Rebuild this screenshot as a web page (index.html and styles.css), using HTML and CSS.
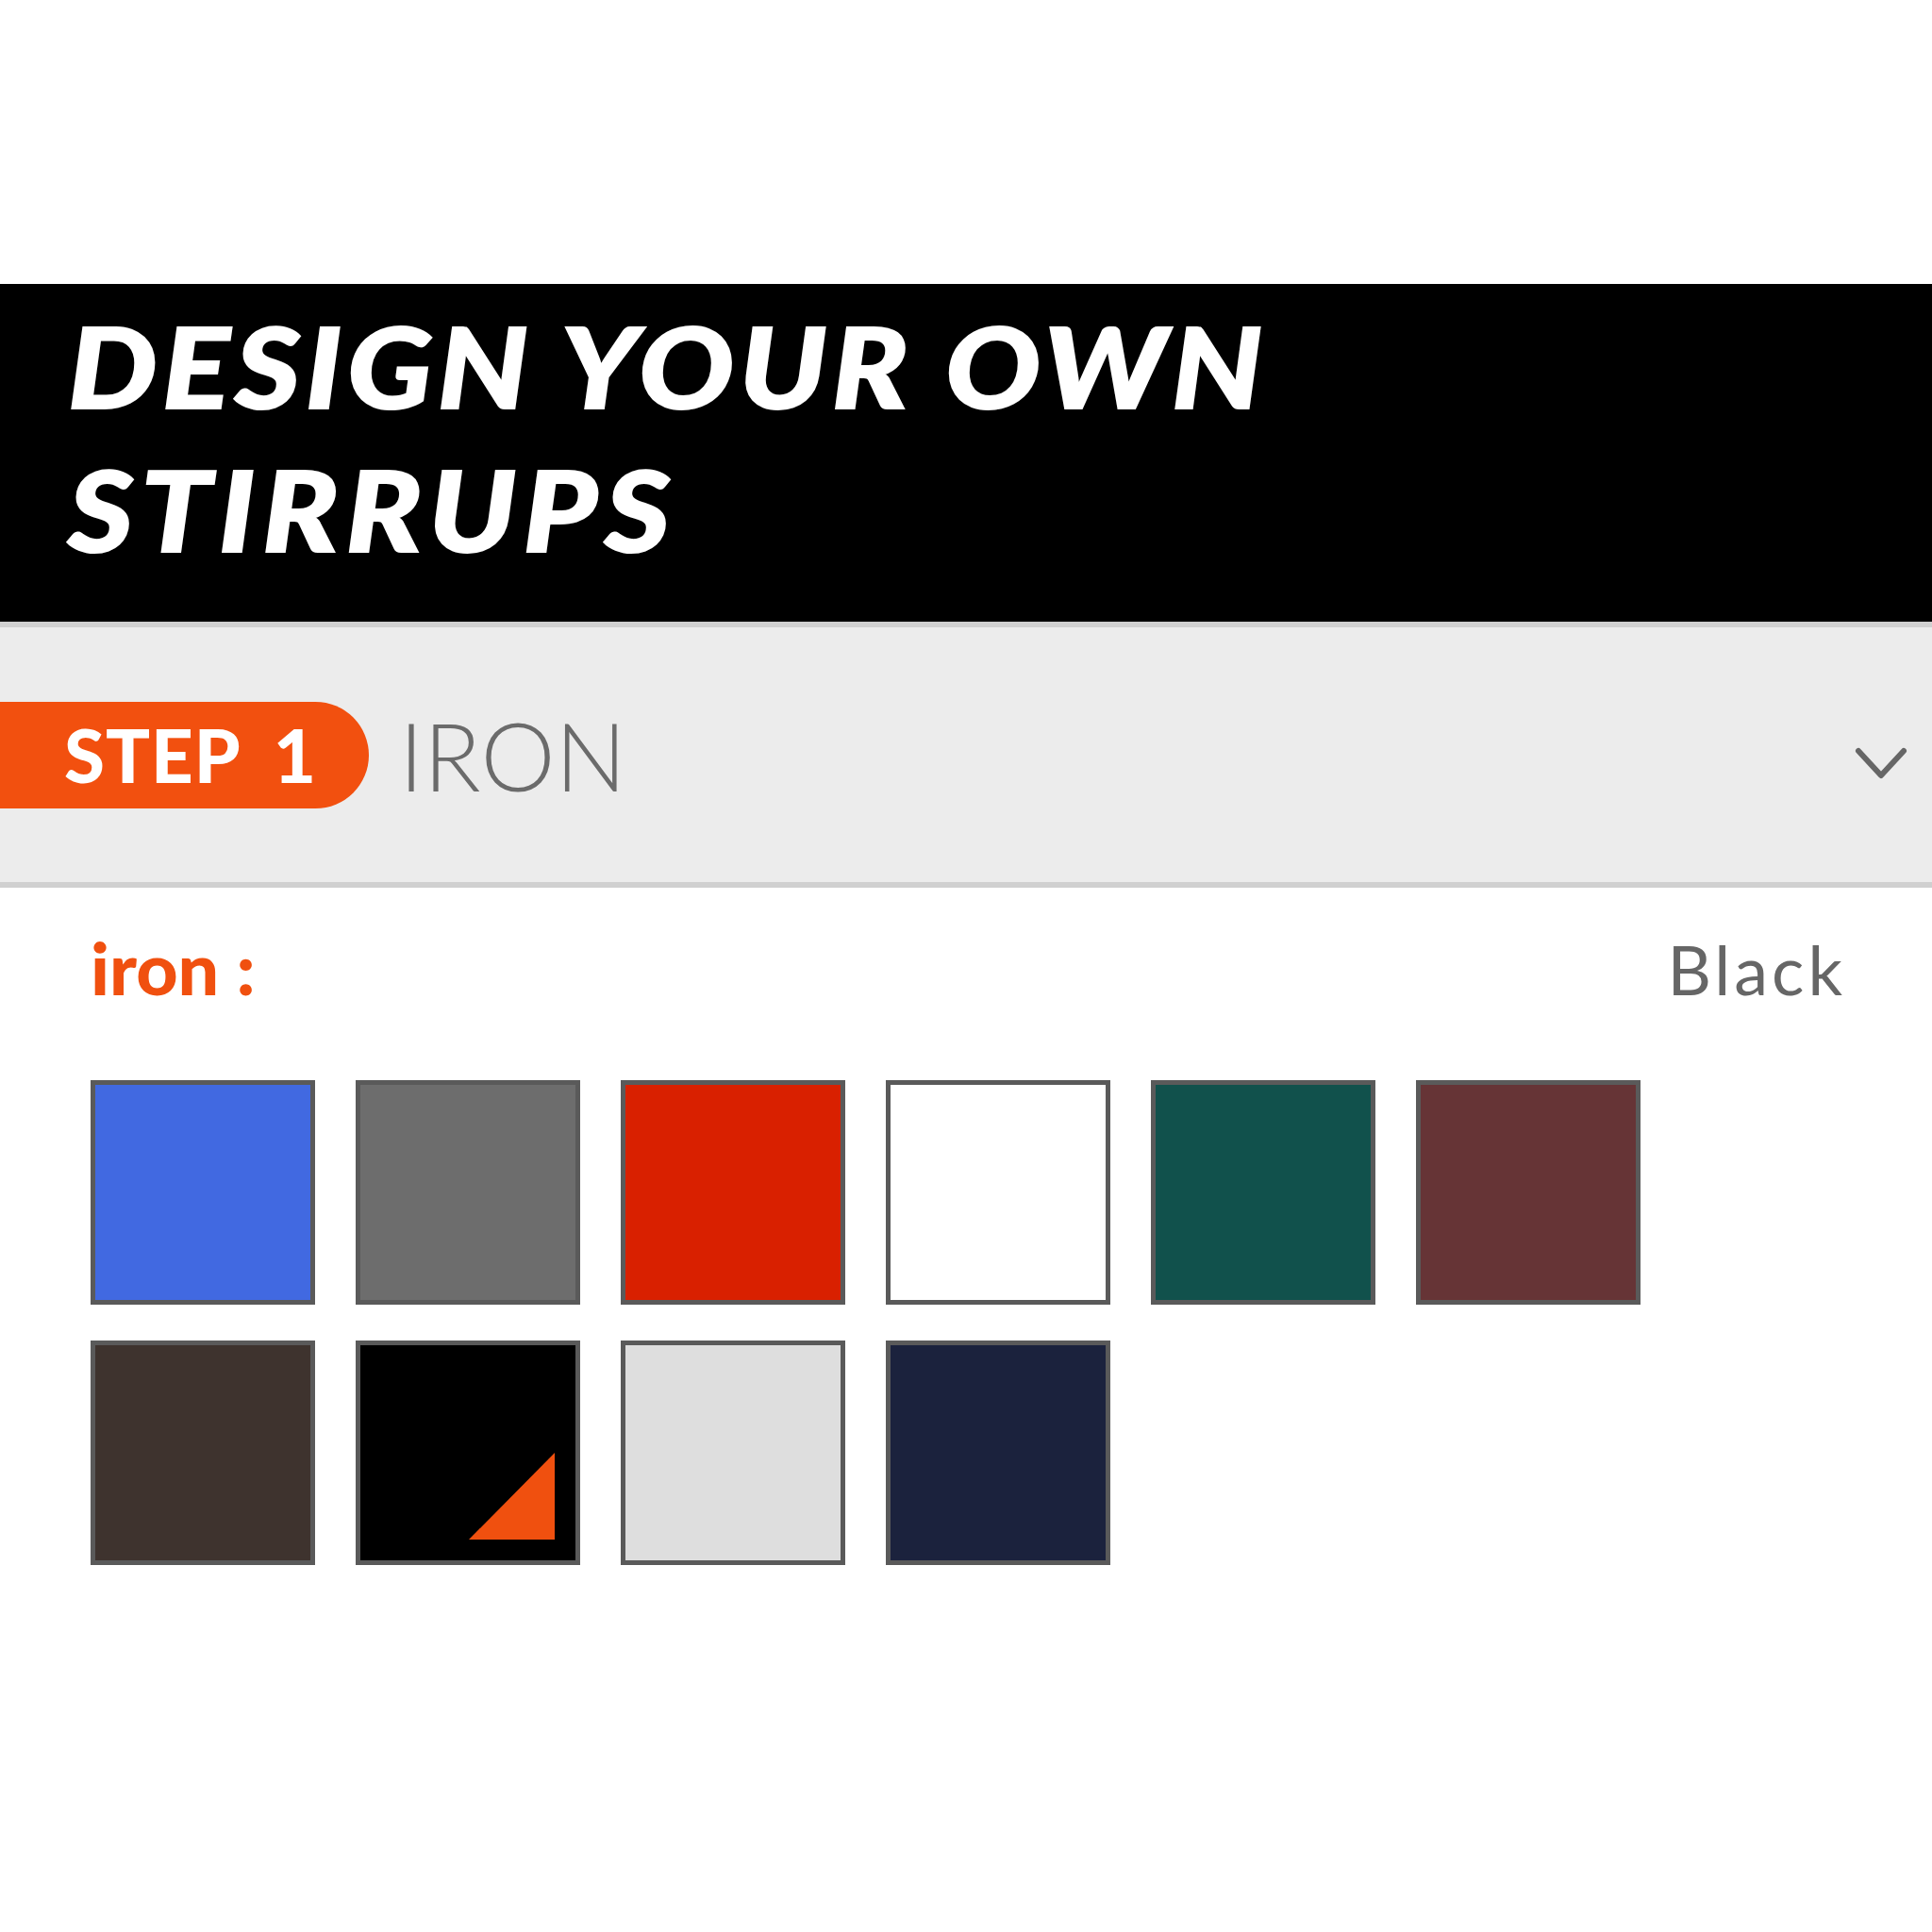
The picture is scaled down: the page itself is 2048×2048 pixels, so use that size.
FILE: index.html
```html
<!DOCTYPE html>
<html lang="en">
<head>
    <meta charset="UTF-8">
    <meta name="viewport" content="width=device-width, initial-scale=1.0">
    <title>Design your own stirrups</title>
    <link rel="stylesheet" href="styles.css">
</head>
<body>
    <div class="designer">
        <h1 class="title">
            <span class="title-line">DESIGN YOUR OWN</span>
            <span class="title-line">STIRRUPS</span>
        </h1>

        <div class="step-bar">
            <div class="step-pill">STEP <span class="step-num">1</span></div>
            <div class="step-name">IRON</div>
            <svg class="chevron" width="56" height="36" viewBox="0 0 56 36">
                <polyline points="4,4 28,30 52,4" fill="none" stroke="#666" stroke-width="6" stroke-linecap="round" stroke-linejoin="round"/>
            </svg>
        </div>

        <div class="option-head">
            <span class="option-label">iron :</span>
            <span class="option-value">Black</span>
        </div>

        <div class="swatches">
            <div class="swatch blue"></div>
            <div class="swatch grey"></div>
            <div class="swatch red"></div>
            <div class="swatch white"></div>
            <div class="swatch green"></div>
            <div class="swatch maroon"></div>
            <div class="swatch brown"></div>
            <div class="swatch black selected"></div>
            <div class="swatch silver"></div>
            <div class="swatch navy"></div>
        </div>
    </div>
</body>
</html>
```

FILE: styles.css
```css
body {
    margin: 0;
    padding: 0;
    background: #fff;
    font-family: Lato, "Liberation Sans", sans-serif;
}
.designer {
    padding-top: 301px;
}
.title {
    margin: 0;
    padding: 10px 72px 44px;
    background: #000;
    color: #fff;
    font-size: 119px;
    font-weight: 900;
    font-style: italic;
    line-height: 152px;
    letter-spacing: 5px;
    -webkit-text-stroke: 2px #fff;
}
.title-line {
    display: block;
    width: fit-content;
    transform: scaleX(1.12);
    transform-origin: 0 0;
}
.title-line + .title-line {
    letter-spacing: 7px;
}
.step-bar {
    display: flex;
    align-items: center;
    height: 270px;
    background: #ececec;
    border-top: 6px solid #d0d0d0;
    border-bottom: 6px solid #d0d0d0;
}
.step-pill {
    display: flex;
    align-items: center;
    box-sizing: border-box;
    width: 391px;
    height: 113px;
    padding-left: 68px;
    background: #f2500f;
    border-radius: 0 57px 57px 0;
    color: #fff;
    font-size: 78px;
    font-weight: 900;
    letter-spacing: 1px;
}
.step-num {
    margin-left: 34px;
}
.step-name {
    margin-left: 32px;
    color: #6b6b6b;
    font-size: 100px;
    font-weight: 300;
}
.chevron {
    margin-left: auto;
    margin-right: 26px;
    margin-top: 20px;
}
.option-head {
    display: flex;
    justify-content: space-between;
    align-items: baseline;
    padding: 39px 95px 0 96px;
    line-height: 90px;
}
.option-label {
    color: #f0500f;
    font-size: 77px;
    font-weight: 900;
}
.option-value {
    color: #666;
    font-size: 72px;
    letter-spacing: 4px;
    margin-right: -4px;
}
.swatches {
    display: grid;
    grid-template-columns: repeat(6, 238px);
    gap: 38px 43px;
    padding: 73px 96px;
}
.swatch {
    position: relative;
    box-sizing: border-box;
    height: 238px;
    border: 5px solid #5a5a5a;
}
.blue { background: #4169e1; }
.grey { background: #6d6d6d; }
.red { background: #d92000; }
.white { background: #fff; }
.green { background: #11514c; }
.maroon { background: #663436; }
.brown { background: #3e332e; }
.black { background: #000; }
.silver { background: #dedede; }
.navy { background: #1b223d; }
.selected::after {
    content: "";
    position: absolute;
    right: 22px;
    bottom: 22px;
    width: 91px;
    height: 92px;
    background: #f0500f;
    clip-path: polygon(100% 0, 100% 100%, 0 100%);
}
```
